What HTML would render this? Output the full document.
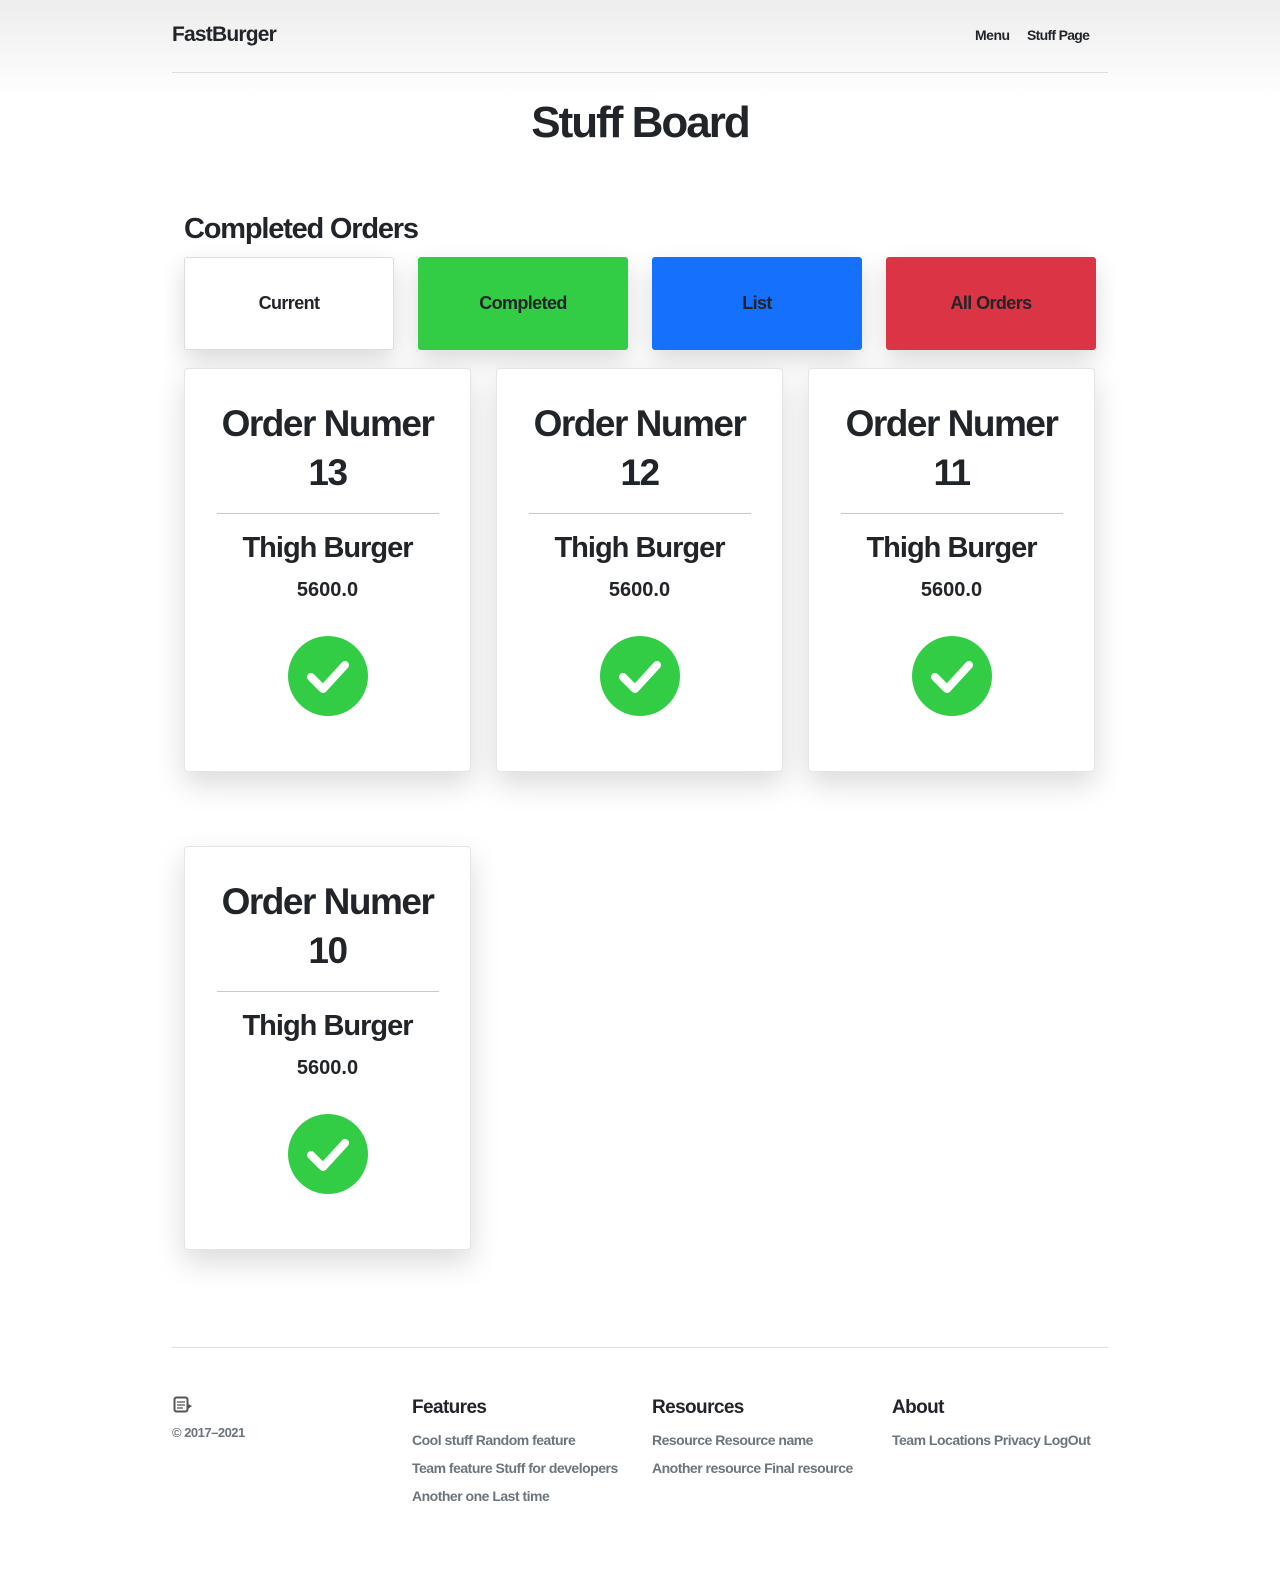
<!DOCTYPE html>
<html><head><meta charset="utf-8">
<style>
*{box-sizing:border-box;margin:0;padding:0}
body{width:1280px;height:1592px;position:relative;background:#fff;font-family:"Liberation Sans",sans-serif;color:#212529;overflow:hidden}
.hdr{position:absolute;left:0;top:0;width:1280px;height:100px;background:linear-gradient(#ededed,#fff)}
.abs{position:absolute}
.t{position:absolute;white-space:nowrap;font-weight:bold;letter-spacing:-0.5px}
.btn{position:absolute;top:257px;width:210px;height:93px;border-radius:3px;display:flex;align-items:center;justify-content:center;font-weight:bold;font-size:18px;letter-spacing:-0.6px;box-shadow:0 10px 25px rgba(0,0,0,.15)}
.card{position:absolute;width:287px;height:404px;background:#fff;border:1px solid #e4e4e4;border-radius:4px;box-shadow:0 12px 30px rgba(0,0,0,.15);text-align:center}
.card h2{position:absolute;left:0;width:100%;top:30px;font-size:37px;line-height:49px;letter-spacing:-1.5px}
.card .hr{position:absolute;left:32px;width:222px;top:144px;border-top:1px solid #c8c8c8}
.card h3{position:absolute;left:0;width:100%;top:163px;font-size:29px;letter-spacing:-1px}
.card .p{position:absolute;left:0;width:100%;top:210px;font-size:20px;font-weight:bold}
.card svg{position:absolute;left:103px;top:267px}
.fh{position:absolute;top:1397px;font-weight:bold;font-size:19px;letter-spacing:-0.6px}
.fl{position:absolute;font-size:14px;font-weight:bold;color:#6c757d;letter-spacing:-0.5px;white-space:nowrap}
</style></head><body>
<div class="hdr"></div>
<div class="t" style="left:172px;top:23px;font-size:21px;letter-spacing:-0.8px">FastBurger</div>
<div class="t" style="left:975px;top:27px;font-size:14px">Menu</div>
<div class="t" style="left:1027px;top:27px;font-size:14px;letter-spacing:-0.7px">Stuff Page</div>
<div class="abs" style="left:172px;top:72px;width:936px;border-top:1px solid #ddd"></div>
<div class="t" style="left:0;width:1280px;text-align:center;top:98px;font-size:44px;letter-spacing:-2px">Stuff Board</div>
<div class="t" style="left:184px;top:213px;font-size:29px;letter-spacing:-1.2px">Completed Orders</div>
<div class="btn" style="left:184px;background:#fff;border:1px solid #ddd">Current</div>
<div class="btn" style="left:418px;background:#32cc45">Completed</div>
<div class="btn" style="left:652px;background:#1570fb">List</div>
<div class="btn" style="left:886px;background:#db3445">All Orders</div>

<div class="card" style="left:184px;top:368px"><h2>Order Numer<br>13</h2><div class="hr"></div><h3>Thigh Burger</h3><div class="p">5600.0</div><svg width="80" height="80"><circle cx="40" cy="40" r="40" fill="#32cc45"/><path d="M23 41 L35 53 L57 29" stroke="#fff" stroke-width="8" fill="none" stroke-linecap="round" stroke-linejoin="round"/></svg></div>
<div class="card" style="left:496px;top:368px"><h2>Order Numer<br>12</h2><div class="hr"></div><h3>Thigh Burger</h3><div class="p">5600.0</div><svg width="80" height="80"><circle cx="40" cy="40" r="40" fill="#32cc45"/><path d="M23 41 L35 53 L57 29" stroke="#fff" stroke-width="8" fill="none" stroke-linecap="round" stroke-linejoin="round"/></svg></div>
<div class="card" style="left:808px;top:368px"><h2>Order Numer<br>11</h2><div class="hr"></div><h3>Thigh Burger</h3><div class="p">5600.0</div><svg width="80" height="80"><circle cx="40" cy="40" r="40" fill="#32cc45"/><path d="M23 41 L35 53 L57 29" stroke="#fff" stroke-width="8" fill="none" stroke-linecap="round" stroke-linejoin="round"/></svg></div>
<div class="card" style="left:184px;top:846px"><h2>Order Numer<br>10</h2><div class="hr"></div><h3>Thigh Burger</h3><div class="p">5600.0</div><svg width="80" height="80"><circle cx="40" cy="40" r="40" fill="#32cc45"/><path d="M23 41 L35 53 L57 29" stroke="#fff" stroke-width="8" fill="none" stroke-linecap="round" stroke-linejoin="round"/></svg></div>

<div class="abs" style="left:172px;top:1347px;width:936px;border-top:1px solid #ddd"></div>
<svg class="abs" style="left:173px;top:1396px" width="22" height="18"><rect x="1.5" y="1.5" width="13" height="14" rx="2" fill="none" stroke="#555" stroke-width="2"/><path d="M4 6h8M4 9h8M4 12h6" stroke="#555" stroke-width="1.3"/><path d="M15 8l4 2-4 3z" fill="#555"/></svg>
<div class="fl" style="left:172px;top:1425px;color:#6c757d;font-size:13px">© 2017–2021</div>
<div class="fh" style="left:412px">Features</div>
<div class="fh" style="left:652px">Resources</div>
<div class="fh" style="left:892px">About</div>
<div class="fl" style="left:412px;top:1432px">Cool stuff Random feature</div>
<div class="fl" style="left:412px;top:1460px">Team feature Stuff for developers</div>
<div class="fl" style="left:412px;top:1488px">Another one Last time</div>
<div class="fl" style="left:652px;top:1432px">Resource Resource name</div>
<div class="fl" style="left:652px;top:1460px">Another resource Final resource</div>
<div class="fl" style="left:892px;top:1432px">Team Locations Privacy LogOut</div>
</body></html>
